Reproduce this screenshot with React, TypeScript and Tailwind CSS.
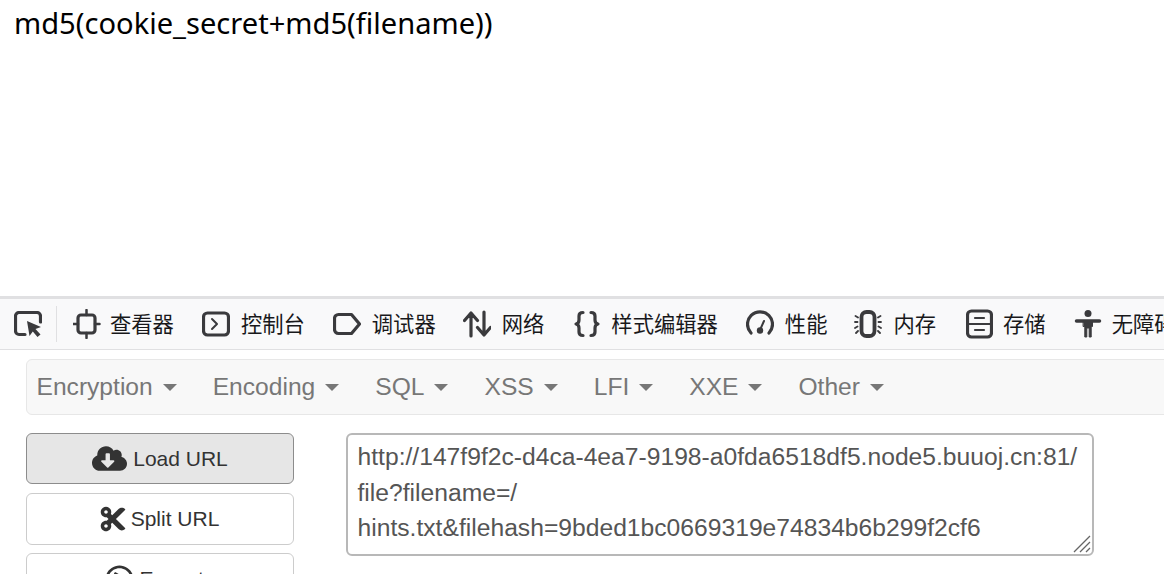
import { FaCloudDownloadAlt, FaCut, FaRegPlayCircle } from "react-icons/fa";
import type { ReactNode } from "react";

const cjk = "font-['Noto_Sans_CJK_SC','Noto_Sans',sans-serif]";

const Icon = ({ children, w = 28 }: { children: ReactNode; w?: number }) => (
  <svg width={w} height="30" viewBox={`0 0 ${w} 30`} fill="none" stroke="#3a3a3d" strokeWidth="3.2" strokeLinecap="round" strokeLinejoin="round" className="shrink-0">
    {children}
  </svg>
);

const tools = [
  {
    label: "查看器",
    cls: "ml-[16px] gap-[9px]",
    icon: (
      <Icon>
        <rect x="5" y="6" width="17" height="18" rx="3" />
        <path d="M13.500 1v5M13.500 24v5M0.500 15h4.500M22 15h4.500" strokeWidth="2.500" />
      </Icon>
    ),
  },
  {
    label: "控制台",
    cls: "ml-[28px] gap-[11px]",
    icon: (
      <Icon>
        <rect x="1.500" y="4" width="25" height="22" rx="4" />
        <path d="M10 10l5 5-5 5" strokeWidth="2" />
      </Icon>
    ),
  },
  {
    label: "调试器",
    cls: "ml-[28px] gap-[11px]",
    icon: (
      <Icon>
        <path d="M5.500 5.500h13l8 9.500-8 9.500h-13a4 4 0 0 1-4-4v-11a4 4 0 0 1 4-4z" />
      </Icon>
    ),
  },
  {
    label: "网络",
    cls: "ml-[27px] gap-[11px]",
    icon: (
      <Icon>
        <path d="M8 27V5M1.500 11.500L8 4l6.500 7.500M21 3v22M14.500 18.500L21 26l6.500-7.500" />
      </Icon>
    ),
  },
  {
    label: "样式编辑器",
    cls: "ml-[28px] gap-[11px]",
    icon: (
      <Icon>
        <path d="M11 3.500c-3 0-4 1-4 3.500v4c0 2-.8 3.500-3 4 2.200.5 3 2 3 4v4c0 2.500 1 3.500 4 3.500M19 3.500c3 0 4 1 4 3.500v4c0 2 .8 3.500 3 4-2.200.5-3 2-3 4v4c0 2.500-1 3.500-4 3.500" />
      </Icon>
    ),
  },
  {
    label: "性能",
    cls: "ml-[28px] gap-[11px]",
    icon: (
      <Icon>
        <path d="M5 24A12.500 12.500 0 1 1 23 24" />
        <circle cx="14" cy="21.500" r="3.200" fill="#3a3a3d" stroke="none" />
        <path d="M14 21l4-9" strokeWidth="2" />
      </Icon>
    ),
  },
  {
    label: "内存",
    cls: "ml-[27px] gap-[11px]",
    icon: (
      <Icon>
        <rect x="7.500" y="3" width="13" height="24" rx="5" strokeWidth="3.800" />
        <path d="M4 8.500L1.500 7M3.500 13H1M3.500 17.500L1 19M4 22l-2 2M24 8.500L26.500 7M24.500 13H27M24.500 17.500L27 19M24 22l2 2" strokeWidth="1.800" />
      </Icon>
    ),
  },
  {
    label: "存储",
    cls: "ml-[30px] gap-[10px]",
    icon: (
      <Icon w={27}>
        <rect x="1.500" y="2" width="24" height="26" rx="4" />
        <path d="M3 15h21" strokeWidth="2" />
        <path d="M9 9h9M9 21h9" strokeWidth="2.200" />
      </Icon>
    ),
  },
  {
    label: "无障碍",
    cls: "ml-[28px] gap-[10px]",
    icon: (
      <Icon>
        <circle cx="14" cy="4.500" r="3.500" fill="#3a3a3d" stroke="none" />
        <path d="M2.500 12h23" strokeWidth="3.500" />
        <path d="M9.500 12h9v5.500h-1.300V28h-2v-9h-2.400v9h-2V17.500H9.500z" fill="#3a3a3d" strokeWidth="1" />
      </Icon>
    ),
  },
];

const menus = ["Encryption", "Encoding", "SQL", "XSS", "LFI", "XXE", "Other"];

const Btn = ({ icon, label, active }: { icon: ReactNode; label: string; active?: boolean }) => (
  <div
    className={
      active
        ? "mb-[1px] h-[51px] flex items-center justify-center gap-[6px] rounded-[6px] border border-[#8c8c8c] bg-[#e6e6e6] text-[21px] text-[#333] shrink-0"
        : "h-[52px] flex items-center justify-center gap-[6px] rounded-[6px] border border-[#ccc] bg-white text-[21px] text-[#333] shrink-0"
    }
  >
    {icon}
    <span>{label}</span>
  </div>
);

export default function App() {
  return (
    <div className="h-[574px] w-[1164px] overflow-hidden bg-white font-['Liberation_Sans',sans-serif]">
      <div className="h-[296px] pl-[14px] font-['Noto_Sans',sans-serif] text-[29.100px] leading-[46px] text-black">md5(cookie_secret+md5(filename))</div>

      <div className={`h-[54px] flex items-center overflow-hidden whitespace-nowrap border-t-[3px] border-b border-[#e0e0e2] bg-[#f9f9fa] pl-[14px] text-[21.300px] text-[#18181a] ${cjk}`}>
        <svg width="28" height="26" viewBox="0 0 28 26" fill="none" className="shrink-0">
          <path d="M11 23.500H5a3.500 3.500 0 0 1-3.500-3.500V5A3.500 3.500 0 0 1 5 1.500h18A3.500 3.500 0 0 1 26.500 5v6" stroke="#3a3a3d" strokeWidth="3.200" strokeLinecap="round" />
          <path d="M13 10l14 6-5.500 2 5 5.500-3 2.500-4.700-5.500-3.300 4.500z" fill="#3a3a3d" />
        </svg>
        <div className="ml-[14px] h-[36px] w-px shrink-0 bg-[#e0e0e2]" />
        {tools.map((t) => (
          <div key={t.label} className={`flex shrink-0 items-center ${t.cls}`}>
            {t.icon}
            <span className="mb-[3px] leading-none">{t.label}</span>
          </div>
        ))}
      </div>

      <div className="ml-[26px] mt-[9px] h-[56px] w-[1200px] flex items-center gap-[36px] rounded-[6px] border border-[#e7e7e7] bg-[#f8f8f8] pl-[9.500px] text-[24.600px] text-[#777]">
        {menus.map((m) => (
          <div key={m} className="flex items-center gap-[10px]">
            <span>{m}</span>
            <span className="mt-[2px] h-0 w-0 border-x-[7px] border-t-[7px] border-x-transparent border-t-[#777]" />
          </div>
        ))}
      </div>

      <div className="ml-[26px] mt-[18px] flex items-start gap-[52px]">
        <div className="flex w-[268px] shrink-0 flex-col gap-[8px]">
          <Btn active icon={<FaCloudDownloadAlt className="text-[35px]" />} label="Load URL" />
          <Btn icon={<FaCut className="-mx-[2px] text-[28px]" />} label="Split URL" />
          <Btn icon={<FaRegPlayCircle className="text-[29px]" />} label="Execute" />
        </div>
        <div className="relative h-[123px] w-[748px]">
          <textarea
            readOnly
            value={"http://147f9f2c-d4ca-4ea7-9198-a0fda6518df5.node5.buuoj.cn:81/\nfile?filename=/\nhints.txt&filehash=9bded1bc0669319e74834b6b299f2cf6"}
            className="block h-full w-full resize-none overflow-hidden rounded-[6px] border-2 border-[#b8b8b8] bg-white pl-[9.500px] pr-[5px] py-[4px] text-[24.670px] leading-[35.500px] text-[#555] outline-none"
          />
          <svg width="18" height="18" viewBox="0 0 18 18" className="absolute bottom-[3px] right-[3px]" stroke="#666" strokeWidth="1.300">
            <path d="M1 17L17 1M7 17L17 7M13 17l4-4" />
          </svg>
        </div>
      </div>
    </div>
  );
}
